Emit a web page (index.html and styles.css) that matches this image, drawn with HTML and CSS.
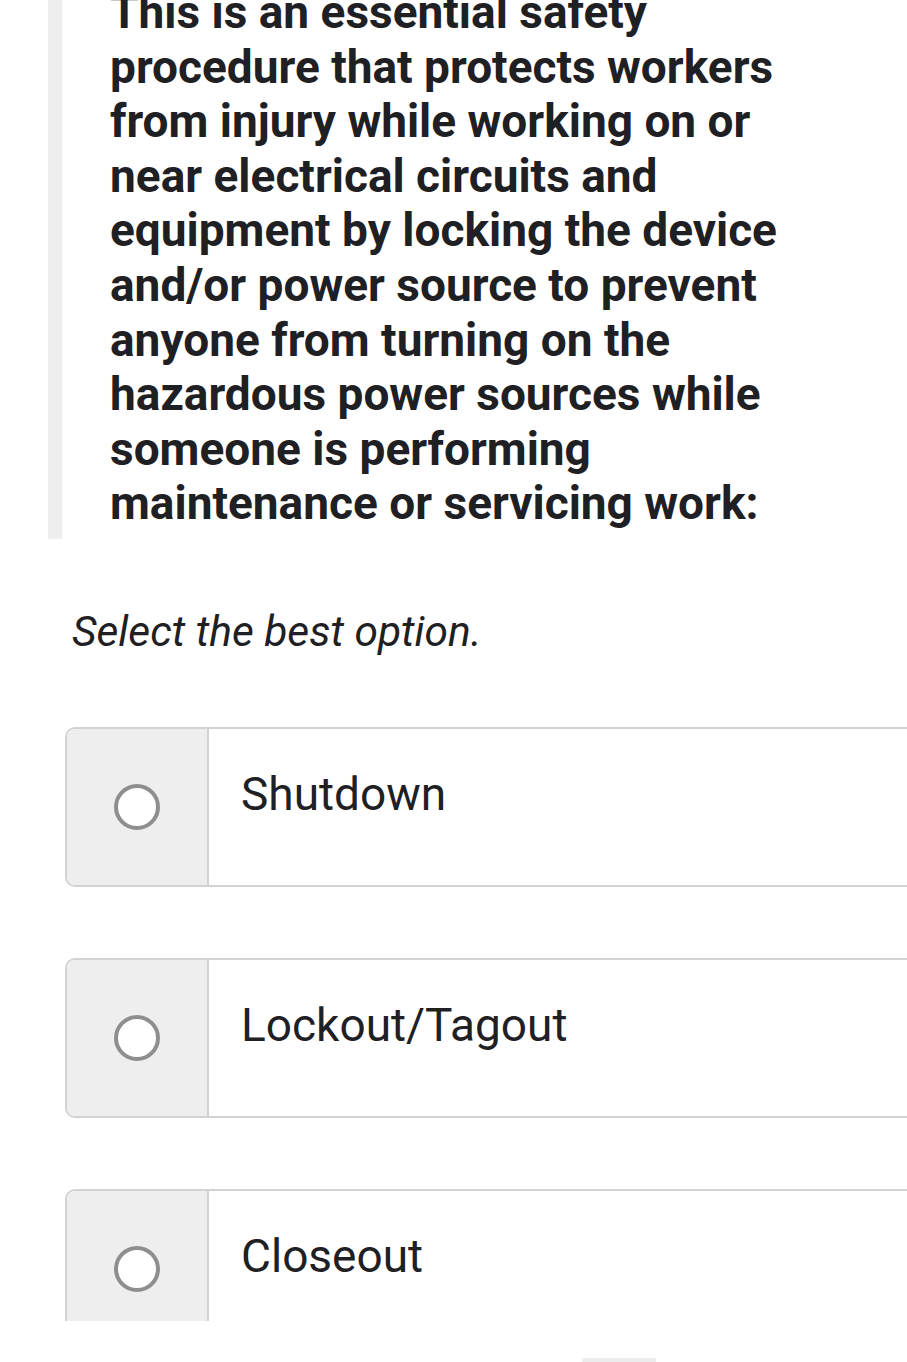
FILE: index.html
```
<!DOCTYPE html>
<html lang="en">

<head>
    <meta charset="UTF-8">
    <meta name="viewport" content="width=device-width, initial-scale=1.0">
    <title>Quiz</title>
    <link rel="stylesheet" href="styles.css">
</head>

<body>
    <div class="screen">
        <div class="content">
            <blockquote class="question">
                This is an essential safety procedure that protects workers from injury while working on or
                near electrical circuits and equipment by locking the device and/or power source to prevent
                anyone from turning on the hazardous power sources while someone is performing maintenance
                or servicing work:
            </blockquote>
            <p class="hint">Select the best option.</p>
            <ul class="options">
                <li class="option">
                    <span class="option-mark"><span class="radio"></span></span>
                    <span class="option-text">Shutdown</span>
                </li>
                <li class="option">
                    <span class="option-mark"><span class="radio"></span></span>
                    <span class="option-text">Lockout/Tagout</span>
                </li>
                <li class="option">
                    <span class="option-mark"><span class="radio"></span></span>
                    <span class="option-text">Closeout</span>
                </li>
            </ul>
        </div>
    </div>
    <div class="nav-bar"><span class="home-pill"></span></div>
</body>

</html>
```

FILE: styles.css
```
html,
body {
    margin: 0;
    background: #fff;
    overflow: hidden;
}

body {
    font-family: Roboto, "Noto Sans", sans-serif;
    color: #1f2023;
}

.screen {
    height: 1321px;
    overflow: hidden;
}

.content {
    margin-top: -15px;
}

.question {
    margin: 0 0 0 48px;
    width: 700px;
    border-left: 14px solid #eeeeee;
    padding: 0 0 8px 48px;
    font-size: 46px;
    font-weight: bold;
    line-height: 54.6px;
}

.hint {
    margin: 66px 0 0 72px;
    font-size: 42.5px;
    font-style: italic;
    line-height: 54.6px;
}

.options {
    list-style: none;
    margin: 67px 0 0 65px;
    padding: 0;
}

.option {
    display: flex;
    width: 900px;
    height: 156px;
    border: 2px solid #d2d2d2;
    border-radius: 10px;
    margin-bottom: 71px;
    overflow: hidden;
}

.option-mark {
    flex: 0 0 140px;
    display: flex;
    align-items: center;
    justify-content: center;
    background: #eeeeee;
    border-right: 2px solid #d2d2d2;
}

.radio {
    width: 38px;
    height: 38px;
    border: 4px solid #8e8e8e;
    border-radius: 50%;
    background: #fff;
}

.option-text {
    padding: 36px 0 0 32px;
    font-size: 46px;
    line-height: 58.5px;
}

.nav-bar {
    height: 41px;
    display: flex;
    justify-content: center;
    align-items: flex-end;
    padding-left: 330px;
}

.home-pill {
    width: 74px;
    height: 4px;
    border-radius: 2px 2px 0 0;
    background: #ececec;
}
```
